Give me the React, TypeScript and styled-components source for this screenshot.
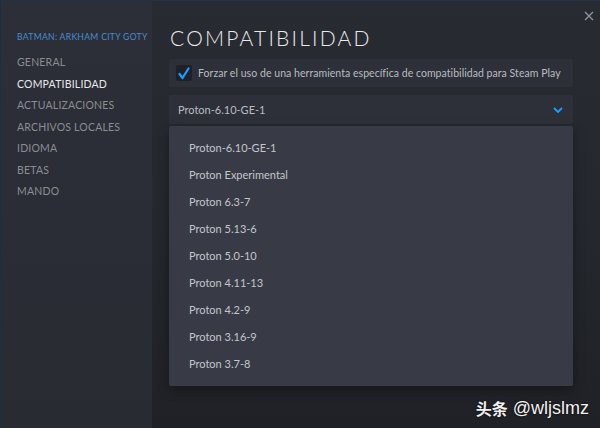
import React from "react";
import styled, { createGlobalStyle } from "styled-components";

const Global = createGlobalStyle`
  html, body { margin: 0; padding: 0; background: #1f2126; }
  #root { width: 600px; height: 428px; }
  * { box-sizing: border-box; }
`;

const Window = styled.div`
  position: relative;
  width: 600px;
  height: 428px;
  display: flex;
  overflow: hidden;
  border-top: 1px solid #22324a;
  border-left: 1px solid #1f2d40;
  font-family: "Lato", "Liberation Sans", sans-serif;
`;

const Sidebar = styled.nav`
  width: 151px;
  flex: none;
  background: linear-gradient(180deg, #2c2f37 0%, #2a2d35 50%, #282b32 100%);
  padding: 29px 0 0 16px;
  display: flex;
  flex-direction: column;
`;

const GameTitle = styled.div`
  color: #4b8bd0;
  font-size: 8.6px;
  letter-spacing: 0.3px;
  line-height: 14px;
  white-space: nowrap;
  margin-bottom: 8px;
`;

const NavItem = styled.div<{ $active?: boolean }>`
  color: ${(p) => (p.$active ? "#e8e9ea" : "#8a8d93")};
  font-size: 10.5px;
  letter-spacing: 0.2px;
  line-height: 21.5px;
  white-space: nowrap;
`;

const Main = styled.main`
  flex: 1;
  background: linear-gradient(180deg, #282b32 0%, #24272d 55%, #1f2126 100%);
  padding: 24px 27px 0 17px;
  display: flex;
  flex-direction: column;
`;

const Title = styled.h1`
  margin: 0 0 9px 1px;
  color: #e9eaeb;
  font-weight: 300;
  font-size: 21px;
  letter-spacing: 2.2px;
  line-height: 25px;
`;

const CheckRow = styled.label`
  height: 28px;
  background: #2d3038;
  border-radius: 2px;
  display: flex;
  align-items: center;
  padding-left: 7px;
  gap: 6px;
  margin-bottom: 8px;
`;

const Box = styled.span`
  width: 16px;
  height: 16px;
  background: #1e2127;
  border-radius: 2px;
  display: flex;
  align-items: center;
  justify-content: center;
`;

const CheckText = styled.span`
  color: #b9bcc0;
  font-size: 10.5px;
  letter-spacing: 0.05px;
  white-space: nowrap;
`;

const Select = styled.div`
  height: 29px;
  background: #2d3038;
  border-radius: 2px;
  display: flex;
  align-items: center;
  justify-content: space-between;
  padding: 0 10px 0 9px;
  margin-bottom: 2px;
`;

const SelectText = styled.span`
  color: #b9bcc0;
  font-size: 11px;
`;

const List = styled.ul`
  margin: 0;
  list-style: none;
  background: #383b45;
  border-radius: 2px;
  padding: 8px 0 9px 20px;
  box-shadow: 0 4px 12px rgba(0, 0, 0, 0.35);
`;

const Option = styled.li`
  color: #c3c6ca;
  font-size: 11px;
  line-height: 27px;
  height: 27px;
`;

const Close = styled.div`
  position: absolute;
  top: 4px;
  right: 6px;
  width: 10px;
  height: 10px;
`;

const Watermark = styled.div`
  position: absolute;
  right: 11px;
  bottom: 10px;
  color: #f2f2f2;
  font-family: "Liberation Sans", "Noto Sans CJK SC", sans-serif;
  font-size: 18px;
  line-height: 20px;
  text-shadow: 0 0 2px rgba(0, 0, 0, 0.9);
  display: flex;
  gap: 5px;
`;

const Cjk = styled.span`
  font-family: "Noto Sans CJK SC", sans-serif;
  font-weight: 700;
  font-size: 16px;
`;

const options = [
  "Proton-6.10-GE-1",
  "Proton Experimental",
  "Proton 6.3-7",
  "Proton 5.13-6",
  "Proton 5.0-10",
  "Proton 4.11-13",
  "Proton 4.2-9",
  "Proton 3.16-9",
  "Proton 3.7-8",
];

const nav = [
  "GENERAL",
  "COMPATIBILIDAD",
  "ACTUALIZACIONES",
  "ARCHIVOS LOCALES",
  "IDIOMA",
  "BETAS",
  "MANDO",
];

export default function App() {
  return (
    <>
      <Global />
      <Window>
        <Sidebar>
          <GameTitle>BATMAN: ARKHAM CITY GOTY</GameTitle>
          {nav.map((n) => (
            <NavItem key={n} $active={n === "COMPATIBILIDAD"}>
              {n}
            </NavItem>
          ))}
        </Sidebar>
        <Main>
          <Title>COMPATIBILIDAD</Title>
          <CheckRow>
            <Box>
              <svg width="12" height="13" viewBox="0 0 12 13">
                <path d="M1.5 7 L4.5 11 L10.5 1.5" fill="none" stroke="#1a9fff" strokeWidth="2.2" strokeLinecap="round" strokeLinejoin="round" />
              </svg>
            </Box>
            <CheckText>
              Forzar el uso de una herramienta específica de compatibilidad para Steam Play
            </CheckText>
          </CheckRow>
          <Select>
            <SelectText>Proton-6.10-GE-1</SelectText>
            <svg width="10" height="6" viewBox="0 0 10 6">
              <path d="M1 1 L5 5 L9 1" fill="none" stroke="#1a9fff" strokeWidth="1.8" />
            </svg>
          </Select>
          <List>
            {options.map((o) => (
              <Option key={o}>{o}</Option>
            ))}
          </List>
        </Main>
        <Close>
          <svg width="10" height="10" viewBox="0 0 10 10">
            <path d="M1 1 L9 9 M9 1 L1 9" stroke="#8f949c" strokeWidth="1.3" />
          </svg>
        </Close>
        <Watermark>
          <Cjk>头条</Cjk>
          <span>@wljslmz</span>
        </Watermark>
      </Window>
    </>
  );
}
